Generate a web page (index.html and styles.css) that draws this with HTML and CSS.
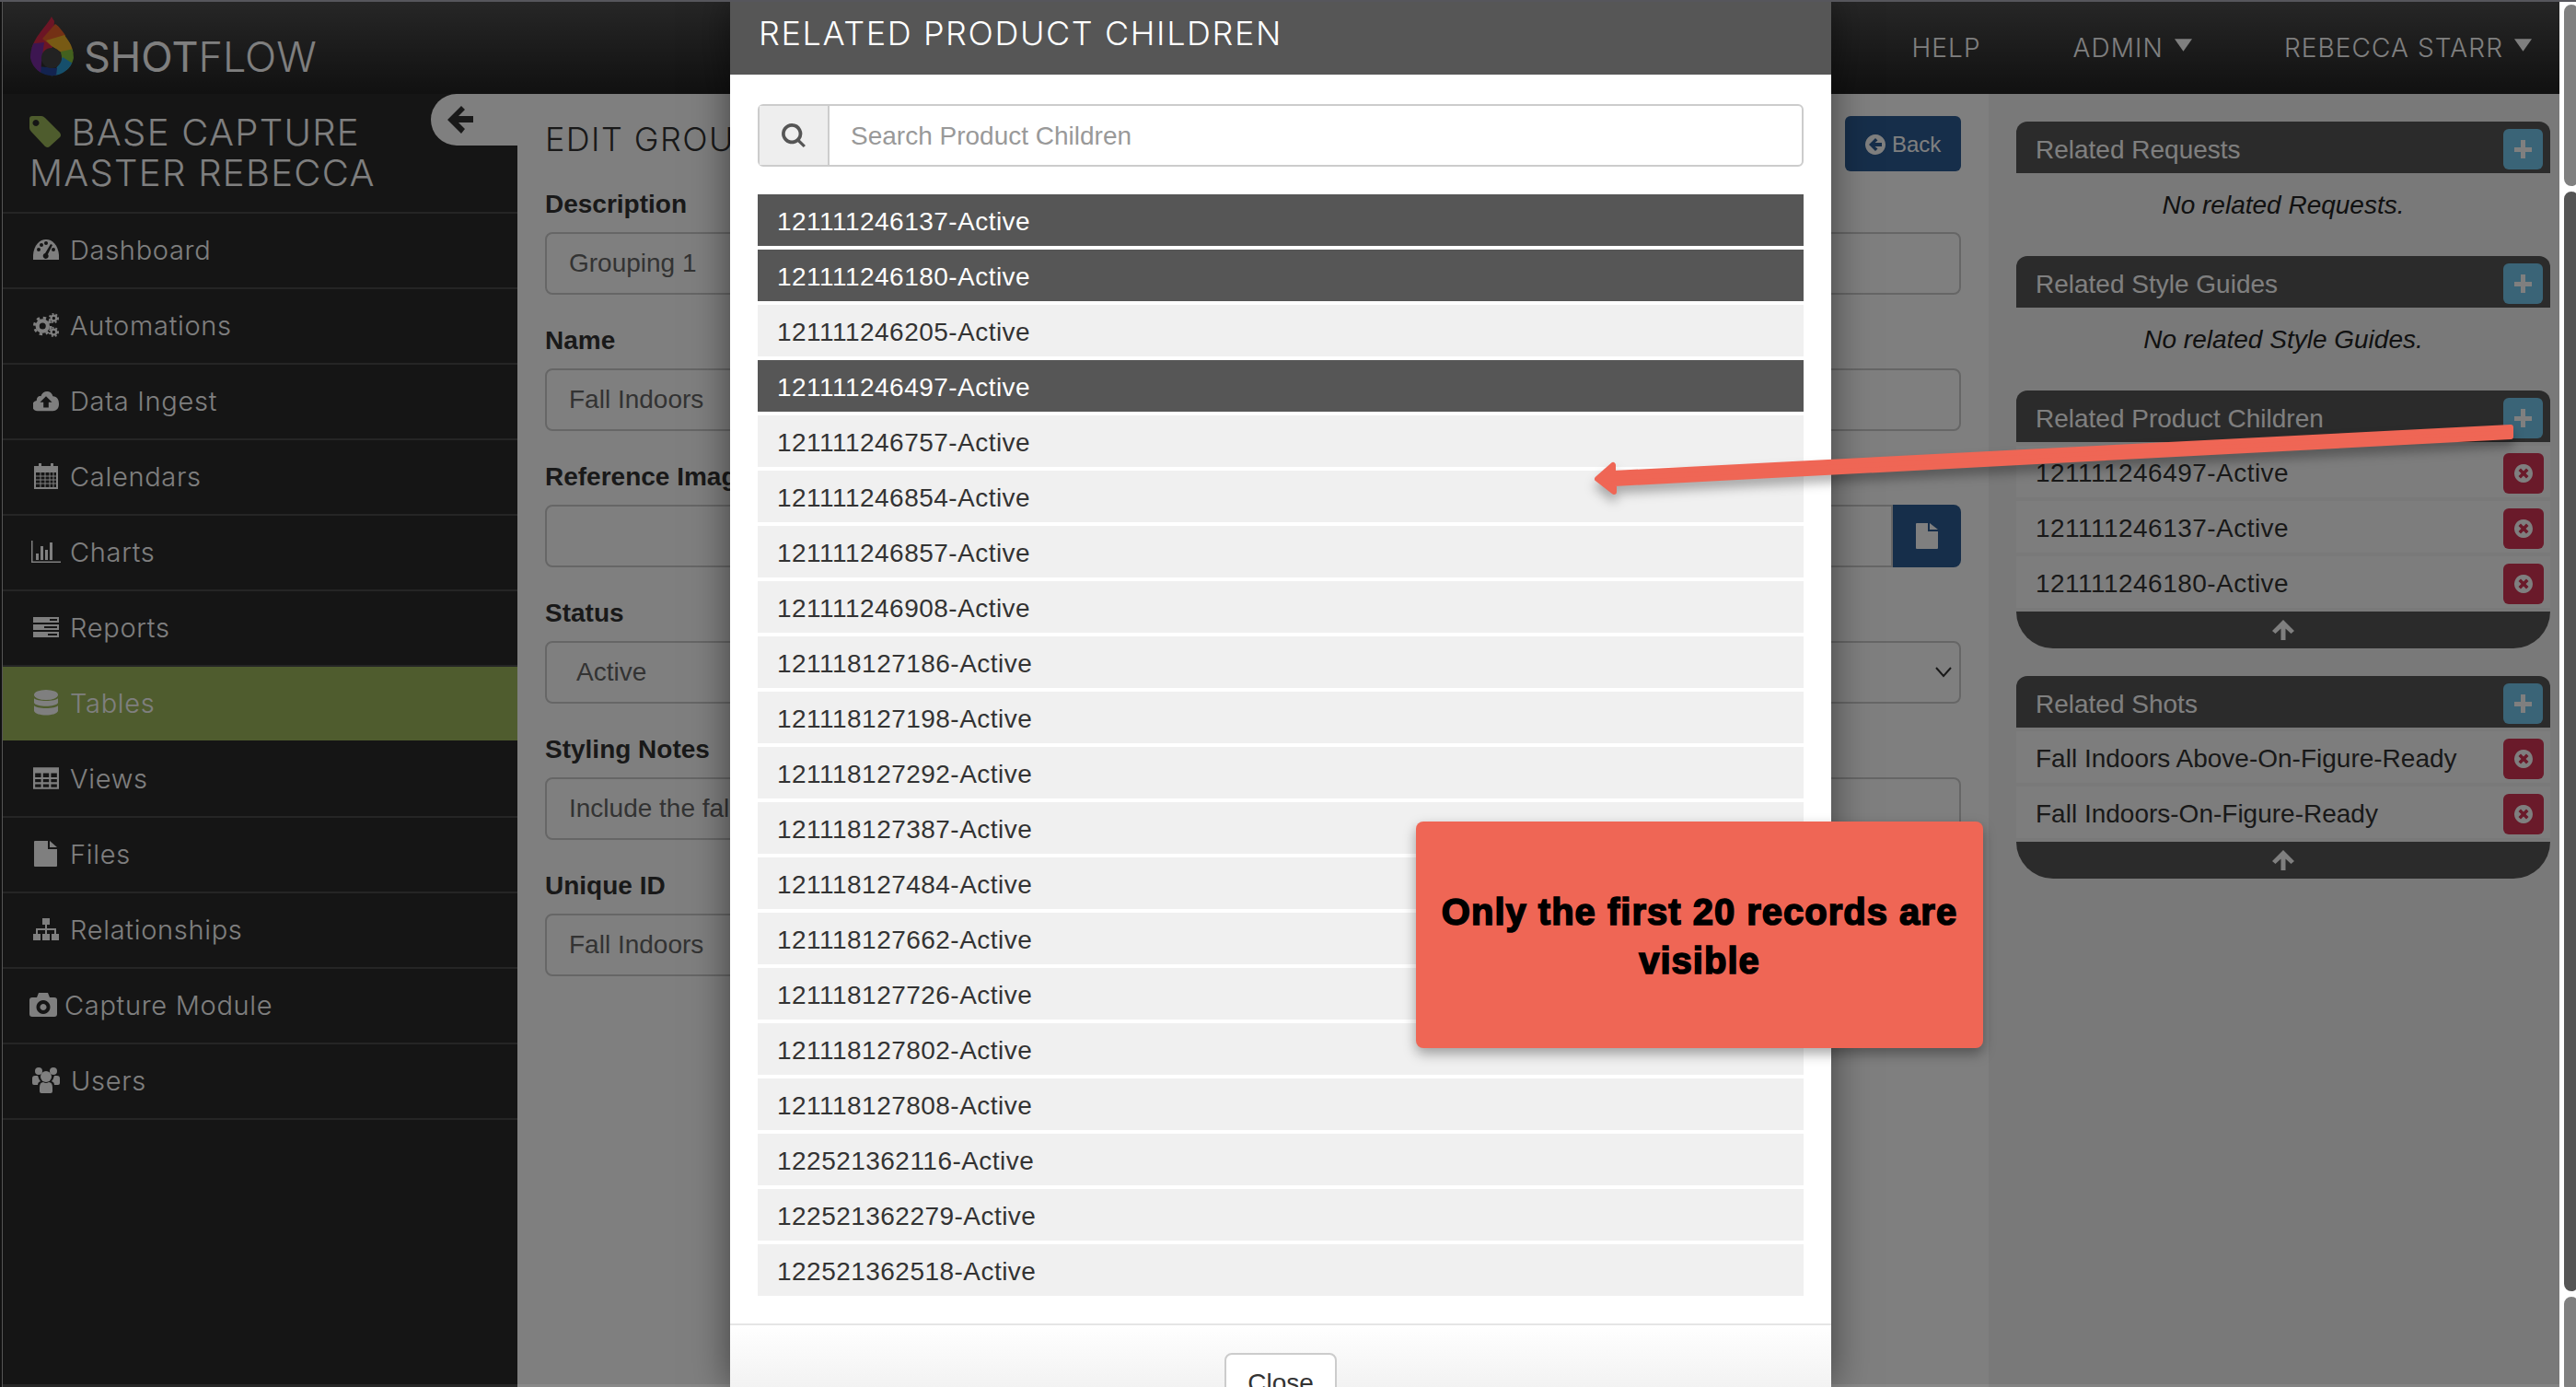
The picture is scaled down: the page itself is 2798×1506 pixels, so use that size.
FILE: index.html
```html
<!DOCTYPE html>
<html lang="en">
<head>
<meta charset="utf-8">
<title>Shotflow</title>
<link rel="stylesheet" href="styles.css">
</head>
<body>
<div class="page">
  <div class="app">
    <header class="navbar">
      <div class="brand">
        <svg class="logo" viewBox="33 18 48 69">
          <defs><clipPath id="drop"><path d="M56 18C62 30 80 42 80 63a24 24 0 0 1-47 0C33 42 50 30 56 18Z"/></clipPath></defs>
          <g clip-path="url(#drop)">
            <path fill="#d92b4b" d="M56 62L30 50V10H60Z"/>
            <path fill="#e8622a" d="M56 50L46 42L60 26L72 34L68 50Z"/>
            <path fill="#f0b428" d="M56 50L50 44L70 38L84 58L68 58Z"/>
            <path fill="#86c23c" d="M66 56L84 52L84 76L68 76Z"/>
            <path fill="#2c9ed8" d="M68 62L84 72L76 90L50 90L60 76Z"/>
            <path fill="#26479e" d="M62 74L60 90L36 90L40 72Z"/>
            <path fill="#7b2da2" d="M45 68L44 82L28 82L28 48L48 46Z"/>
            <circle cx="56" cy="63" r="11" fill="#444"/>
          </g>
        </svg>
        <span class="wordmark">SHOT<span class="wordmark-thin">FLOW</span></span>
      </div>
      <nav class="topnav">
        <a class="topnav-link">HELP</a>
        <a class="topnav-link">ADMIN <svg class="caret" viewBox="0 0 20 14"><path d="M0 0H20L10 14Z"/></svg></a>
        <a class="topnav-link">REBECCA STARR <svg class="caret" viewBox="0 0 20 14"><path d="M0 0H20L10 14Z"/></svg></a>
      </nav>
    </header>
    <div class="workspace">
      <aside class="sidebar">
        <div class="project">
          <svg class="tag" viewBox="0 0 34 34"><path fill-rule="evenodd" d="M3 0H13Q15 0 17 2L33 18Q35 21 33 23L22 33Q20 35 17 33L2 17Q0 15 0 13V3Q0 0 3 0ZM7 4a3.5 3.5 0 1 0 .01 0Z"/></svg>
          BASE CAPTURE<br>MASTER REBECCA
        </div>
        <a class="side-item">
          <svg class="ic" viewBox="0 0 28 22"><path d="M0 22C-1 8 6 0 14 0S29 8 28 22Z"/><g class="cut"><circle cx="6" cy="11" r="2"/><circle cx="9" cy="6" r="2"/><circle cx="14" cy="4" r="2"/><circle cx="22" cy="11" r="2"/><path d="M19 5L21 6L16 16A3 3 0 1 1 13 15Z"/></g></svg>
          Dashboard
        </a>
        <a class="side-item">
          <svg class="ic" viewBox="0 0 30 28"><circle cx="11" cy="15" r="6" fill="none" stroke="#fff" stroke-width="4.5"/><circle cx="11" cy="15" r="9.5" fill="none" stroke="#fff" stroke-width="3" stroke-dasharray="3.6 3.9"/><circle cx="24" cy="6" r="3" fill="none" stroke="#fff" stroke-width="2.4"/><circle cx="24" cy="6" r="5" fill="none" stroke="#fff" stroke-width="2" stroke-dasharray="2 2.2"/><circle cx="24" cy="22" r="3" fill="none" stroke="#fff" stroke-width="2.4"/><circle cx="24" cy="22" r="5" fill="none" stroke="#fff" stroke-width="2" stroke-dasharray="2 2.2"/></svg>
          Automations
        </a>
        <a class="side-item">
          <svg class="ic" viewBox="0 0 30 24"><path d="M6 24A6 6 0 0 1 4 12C4 8 7 6 9 7C11 0 21 -1 23 7C28 7 30 11 30 16C30 21 27 24 23 24Z"/><path class="cut" d="M15 7L22 14H18V20H12V14H8Z"/></svg>
          Data Ingest
        </a>
        <a class="side-item">
          <svg class="ic" viewBox="0 0 26 28"><path fill-rule="evenodd" d="M0 3H26V28H0ZM2 10V26H24V10Z"/><path d="M5 0h3v6H5zM18 0h3v6h-3zM2 13.5h22v1H2zM2 17.5h22v1H2zM2 21.5h22v1H2zM6.500 10h1v16h-1zM11.500 10h1v16h-1zM16.500 10h1v16h-1zM20.500 10h1v16h-1z"/></svg>
          Calendars
        </a>
        <a class="side-item side-item-wide">
          <svg class="ic" viewBox="0 0 32 24"><path d="M0 0h1.500v22.500H32V24H0zM5 14h3v7H5zM10 6h3v15h-3zM15 10h3v11h-3zM20 2h3v19h-3z"/></svg>
          Charts
        </a>
        <a class="side-item">
          <svg class="ic" viewBox="0 0 28 22"><path fill-rule="evenodd" d="M0 0H28V6H0ZM18 2V4H26V2ZM0 8H28V14H0ZM12 10V12H26V10ZM0 16H28V22H0ZM16 18V20H26V18Z"/></svg>
          Reports
        </a>
        <a class="side-item side-item-active">
          <svg class="ic" viewBox="0 0 26 28"><ellipse cx="13" cy="5.500" rx="13" ry="5.500"/><path d="M0 9C2 13 24 13 26 9V14C24 19 2 19 0 14ZM0 17C2 21 24 21 26 17V23C24 29 2 29 0 23Z"/></svg>
          Tables
        </a>
        <a class="side-item">
          <svg class="ic" viewBox="0 0 26 22"><path fill-rule="evenodd" d="M0 0H26V22H0ZM2 6V10H8V6ZM10 6V10H16V6ZM18 6V10H24V6ZM2 12V15H8V12ZM10 12V15H16V12ZM18 12V15H24V12ZM2 17V20H8V17ZM10 17V20H16V17ZM18 17V20H24V17Z"/></svg>
          Views
        </a>
        <a class="side-item">
          <svg class="ic" viewBox="0 0 26 28"><path d="M1 0H15V9H25V27Q25 28 24 28H1Q0 28 0 27V1Q0 0 1 0ZM17 0L25 7H17Z"/></svg>
          Files
        </a>
        <a class="side-item">
          <svg class="ic" viewBox="0 0 28 24"><path d="M10 0h8v7h-8zM0 17h8v7H0zM10 17h8v7h-8zM20 17h8v7h-8z"/><path d="M13 7h2v4h10v6h-2v-4h-8v4h-2v-4H5v4H3v-6h10z"/></svg>
          Relationships
        </a>
        <a class="side-item side-item-camera">
          <svg class="ic" viewBox="0 0 30 26"><path fill-rule="evenodd" d="M3 5H8L10 0H20L22 5H27Q30 5 30 8V23Q30 26 27 26H3Q0 26 0 23V8Q0 5 3 5ZM15 8a7.500 7.500 0 1 0 .01 0ZM15 12a3.500 3.500 0 1 1-.01 0Z"/></svg>
          Capture Module
        </a>
        <a class="side-item">
          <svg class="ic ic-users" viewBox="0 0 30 28"><circle cx="7" cy="4" r="4"/><circle cx="23" cy="4" r="4"/><circle cx="15" cy="10" r="6"/><path d="M0 12Q0 9 3 9H6Q7 13 9 15Q6 16 6 19H2Q0 19 0 17ZM30 12Q30 9 27 9H24Q23 13 21 15Q24 16 24 19H28Q30 19 30 17ZM8 22Q8 16 12 16Q15 18 18 16Q22 16 22 22V26Q22 28 20 28H10Q8 28 8 26Z"/></svg>
          Users
        </a>
      </aside>
      <main class="main">
        <button class="collapse" type="button" aria-label="Collapse">
          <svg viewBox="0 0 28 30"><path d="M15 0L19 4L12 11H28V18H12L19 25L15 30L0 15Z"/></svg>
        </button>
        <div class="form-area">
          <div class="form-head">
            <h1 class="form-title">EDIT GROUPING</h1>
            <a class="back-btn"><svg viewBox="0 0 22 22"><path fill-rule="evenodd" d="M11 0a11 11 0 1 1-.01 0ZM11 4L4 11L11 18L13.500 15.500L10.500 13H18V9H10.500L13.500 6.500Z"/></svg>Back</a>
          </div>
          <div class="group"><div class="label">Description</div><div class="field">Grouping 1</div></div>
          <div class="group"><div class="label">Name</div><div class="field">Fall Indoors</div></div>
          <div class="group"><div class="label">Reference Image</div>
            <div class="input-group"><div class="field field-flex"></div><div class="file-btn"><svg viewBox="0 0 24 28"><path d="M1 0H13V9H24V27Q24 28 23 28H1Q0 28 0 27V1Q0 0 1 0ZM15 0L24 7H15Z"/></svg></div></div>
          </div>
          <div class="group"><div class="label">Status</div><div class="field field-select"><span>Active</span><svg viewBox="0 0 18 12"><path d="M1 1L9 10L17 1" fill="none" stroke="#333" stroke-width="2"/></svg></div></div>
          <div class="group"><div class="label">Styling Notes</div><div class="field">Include the fall collection</div></div>
          <div class="group"><div class="label">Unique ID</div><div class="field">Fall Indoors</div></div>
        </div>
      </main>
      <aside class="related">
        <section class="panel">
          <div class="panel-head">Related Requests<span class="add-btn"></span></div>
          <p class="panel-empty">No related Requests.</p>
        </section>
        <section class="panel">
          <div class="panel-head">Related Style Guides<span class="add-btn"></span></div>
          <p class="panel-empty">No related Style Guides.</p>
        </section>
        <section class="panel">
          <div class="panel-head">Related Product Children<span class="add-btn"></span></div>
          <div class="panel-row"><span class="num">121111246497-Active</span><span class="del-btn"><svg viewBox="0 0 20 20"><path fill-rule="evenodd" d="M10 0a10 10 0 1 1-.01 0ZM7 4.500L4.500 7L7.500 10L4.500 13L7 15.500L10 12.500L13 15.500L15.500 13L12.500 10L15.500 7L13 4.500L10 7.500Z"/></svg></span></div>
          <div class="panel-row"><span class="num">121111246137-Active</span><span class="del-btn"><svg viewBox="0 0 20 20"><path fill-rule="evenodd" d="M10 0a10 10 0 1 1-.01 0ZM7 4.500L4.500 7L7.500 10L4.500 13L7 15.500L10 12.500L13 15.500L15.500 13L12.500 10L15.500 7L13 4.500L10 7.500Z"/></svg></span></div>
          <div class="panel-row"><span class="num">121111246180-Active</span><span class="del-btn"><svg viewBox="0 0 20 20"><path fill-rule="evenodd" d="M10 0a10 10 0 1 1-.01 0ZM7 4.500L4.500 7L7.500 10L4.500 13L7 15.500L10 12.500L13 15.500L15.500 13L12.500 10L15.500 7L13 4.500L10 7.500Z"/></svg></span></div>
          <div class="panel-foot"><svg viewBox="0 0 24 22"><path d="M12 0L24 12L20.500 15L14.500 9.500V22H9.500V9.500L3.500 15L0 12Z"/></svg></div>
        </section>
        <section class="panel">
          <div class="panel-head">Related Shots<span class="add-btn"></span></div>
          <div class="panel-row">Fall Indoors Above-On-Figure-Ready<span class="del-btn"><svg viewBox="0 0 20 20"><path fill-rule="evenodd" d="M10 0a10 10 0 1 1-.01 0ZM7 4.500L4.500 7L7.500 10L4.500 13L7 15.500L10 12.500L13 15.500L15.500 13L12.500 10L15.500 7L13 4.500L10 7.500Z"/></svg></span></div>
          <div class="panel-row">Fall Indoors-On-Figure-Ready<span class="del-btn"><svg viewBox="0 0 20 20"><path fill-rule="evenodd" d="M10 0a10 10 0 1 1-.01 0ZM7 4.500L4.500 7L7.500 10L4.500 13L7 15.500L10 12.500L13 15.500L15.500 13L12.500 10L15.500 7L13 4.500L10 7.500Z"/></svg></span></div>
          <div class="panel-foot"><svg viewBox="0 0 24 22"><path d="M12 0L24 12L20.500 15L14.500 9.500V22H9.500V9.500L3.500 15L0 12Z"/></svg></div>
        </section>
      </aside>
    </div>
  </div>
  <div class="scrollbar">
    <div class="scroll-piece scroll-top"></div>
    <div class="scroll-piece scroll-thumb"></div>
    <div class="scroll-piece scroll-bottom"></div>
  </div>
  <div class="backdrop"></div>
  <div class="bottom-edge"></div>
  <div class="top-edge"></div>
  <div class="left-edge"></div>

  <div class="modal">
    <div class="modal-head">RELATED PRODUCT CHILDREN</div>
    <div class="modal-body">
      <div class="search">
        <span class="search-addon"><svg viewBox="0 0 28 28"><path fill-rule="evenodd" d="M12 0a12 12 0 0 1 9.500 19.300L28 25.800L25.500 28L19 21.800A12 12 0 1 1 12 0ZM12 4a8 8 0 1 0 .01 0Z"/></svg></span>
        <span class="search-input">Search Product Children</span>
      </div>
      <ul class="pick-list">
        <li class="pick pick-on">121111246137-Active</li>
        <li class="pick pick-on">121111246180-Active</li>
        <li class="pick">121111246205-Active</li>
        <li class="pick pick-on">121111246497-Active</li>
        <li class="pick">121111246757-Active</li>
        <li class="pick">121111246854-Active</li>
        <li class="pick">121111246857-Active</li>
        <li class="pick">121111246908-Active</li>
        <li class="pick">121118127186-Active</li>
        <li class="pick">121118127198-Active</li>
        <li class="pick">121118127292-Active</li>
        <li class="pick">121118127387-Active</li>
        <li class="pick">121118127484-Active</li>
        <li class="pick">121118127662-Active</li>
        <li class="pick">121118127726-Active</li>
        <li class="pick">121118127802-Active</li>
        <li class="pick">121118127808-Active</li>
        <li class="pick">122521362116-Active</li>
        <li class="pick">122521362279-Active</li>
        <li class="pick">122521362518-Active</li>
      </ul>
    </div>
    <div class="modal-foot"><span class="close-btn">Close</span></div>
  </div>

  <div class="callout">Only the first 20 records are visible</div>
  <svg class="arrow" viewBox="0 0 2798 1506"><path d="M1735 520L1752 505L1752 514L2727 464L2727 474L1753 525L1753 534Z"/></svg>
</div>
</body>
</html>
```
FILE: styles.css
```css
* { box-sizing: border-box; }
html, body { margin: 0; height: 100%; }
body {
  font-family: "Liberation Sans", Arial, sans-serif;
  font-size: 28px;
  color: #333;
  overflow: hidden;
  background: #fff;
}
svg { display: block; }

.page { position: relative; display: flex; width: 2798px; height: 1506px; overflow: hidden; }
.app { flex: 1; min-width: 0; display: flex; flex-direction: column; }

/* top bar */
.navbar {
  height: 102px;
  flex: none;
  display: flex;
  justify-content: space-between;
  align-items: flex-start;
  background: linear-gradient(#4e4e4e, #222);
  font-family: Inter, "Liberation Sans", sans-serif;
  color: #fff;
}
.brand { display: flex; padding: 18px 0 0 33px; }
.logo { width: 48px; height: 69px; }
.wordmark { margin: 17px 0 0 10px; font-size: 45px; line-height: 54px; }
.wordmark-thin { font-weight: 300; }
.topnav { display: flex; gap: 100px; padding: 34px 30px 0 0; }
.topnav-link { display: flex; align-items: center; gap: 12px; font-size: 28px; line-height: 36px; font-weight: 300; letter-spacing: 1.1px; }
.caret { width: 19px; height: 14px; fill: #fff; margin-top: -6px; }

.workspace { flex: 1; min-height: 0; display: flex; }

/* left navigation */
.sidebar {
  width: 562px;
  flex: none;
  background: #2a2a2a;
  color: #fff;
  font-family: Inter, "Liberation Sans", sans-serif;
  padding-left: 3px;
}
.project {
  height: 130px;
  padding: 20px 0 0 29px;
  font-size: 40px;
  line-height: 44px;
  font-weight: 300;
  letter-spacing: 1.3px;
  border-bottom: 2px solid #4a4a4a;
}
.tag { display: inline-block; width: 34px; height: 34px; fill: #9db85a; margin-right: -1px; vertical-align: -2px; }
.side-item {
  height: 82px;
  display: flex;
  align-items: center;
  gap: 12px;
  padding-left: 33px;
  padding-bottom: 2px;
  font-size: 29px;
  font-weight: 300;
  letter-spacing: 0.7px;
  border-bottom: 2px solid #4a4a4a;
}
.ic { width: 28px; height: 28px; fill: #fff; flex: none; }
.ic .cut { fill: #2a2a2a; }
.side-item-wide { padding-left: 31px; gap: 10px; }
.side-item-wide .ic { width: 32px; }
.side-item-camera { padding-left: 29px; gap: 8px; }
.side-item-camera .ic { width: 30px; }
.ic-users { width: 30px; margin-left: -1px; }
.side-item-active { background: #9eb85c; border-bottom-color: #2a2a2a; }
.side-item-active .ic { fill: #fff; }

/* form */
.main { flex: 1; min-width: 0; position: relative; background: #fff; }
.collapse {
  position: absolute;
  left: -94px;
  top: 0;
  width: 94px;
  height: 56px;
  padding: 0 0 0 18px;
  border: 0;
  background: #fff;
  border-radius: 28px 0 0 28px;
}
.collapse svg { width: 28px; height: 30px; fill: #333; }
.form-area { padding: 24px 30px 0 30px; }
.form-head { height: 60px; margin-bottom: 18px; display: flex; justify-content: space-between; }
.form-title { margin: 3px 0 0; font: 300 36px/44px Inter, sans-serif; letter-spacing: 1.4px; color: #333; }
.back-btn {
  width: 126px;
  height: 60px;
  display: flex;
  align-items: center;
  gap: 7px;
  padding-left: 22px;
  padding-top: 2px;
  border-radius: 6px;
  background: #2c5c94;
  color: #fff;
  font-size: 24px;
}
.back-btn svg { width: 22px; height: 22px; fill: #fff; }
.group { margin-bottom: 32px; }
.label { height: 36px; margin-bottom: 12px; font-weight: 700; line-height: 36px; }
.field {
  height: 68px;
  display: flex;
  align-items: center;
  padding: 0 24px;
  border: 2px solid #ccc;
  border-radius: 8px;
  background: #fff;
  color: #666;
}
.input-group { display: flex; }
.field-flex { flex: 1; border-radius: 8px 0 0 8px; }
.file-btn {
  width: 74px;
  height: 68px;
  display: flex;
  align-items: center;
  justify-content: center;
  border-radius: 0 8px 8px 0;
  background: #2c5c94;
}
.file-btn svg { width: 24px; height: 28px; fill: #fff; }
.field-select { justify-content: space-between; padding: 0 8px 0 32px; }
.field-select svg { width: 18px; height: 12px; }

/* related column */
.related { width: 620px; flex: none; padding: 30px 10px 0 30px; background: #f2f2f2; }
.panel { margin-bottom: 30px; }
.panel-head {
  height: 56px;
  display: flex;
  justify-content: space-between;
  padding: 12px 8px 0 21px;
  border-radius: 12px 12px 0 0;
  background: #565656;
  color: #fff;
  line-height: 38px;
  margin-bottom: 4px;
}
.add-btn {
  position: relative;
  width: 43px;
  height: 44px;
  margin-top: -4px;
  border-radius: 6px;
  background: #74c8ee;
}
.add-btn::before, .add-btn::after { content: ""; position: absolute; background: #fff; }
.add-btn::before { left: 12px; top: 20px; width: 19px; height: 5px; }
.add-btn::after { left: 19px; top: 12px; width: 5px; height: 20px; }
.panel-empty {
  height: 56px;
  margin: 0;
  padding-top: 11px;
  text-align: center;
  font-style: italic;
  line-height: 40px;
  color: #222;
}
.panel-row {
  height: 56px;
  margin-bottom: 4px;
  display: flex;
  justify-content: space-between;
  align-items: center;
  padding: 4px 7px 0 21px;
  background: #fbfbfb;
}
.num { letter-spacing: 0.47px; }
.del-btn {
  width: 44px;
  height: 44px;
  flex: none;
  display: flex;
  align-items: center;
  justify-content: center;
  border-radius: 6px;
  background: #d43454;
}
.del-btn svg { width: 20px; height: 20px; fill: #fff; }
.panel-foot {
  height: 40px;
  display: flex;
  align-items: center;
  justify-content: center;
  border-radius: 0 0 40px 40px;
  background: #565656;
}
.panel-foot svg { width: 24px; height: 22px; fill: #fff; }

/* browser scrollbar */
.scrollbar { width: 18px; flex: none; padding-left: 2px; overflow: hidden; position: relative; z-index: 15; background: #fff; }
.scroll-piece { width: 22px; border: 3px solid #fff; border-radius: 11px; }
.scroll-top { height: 203px; margin-top: 2px; background: #808080; }
.scroll-thumb { height: 1200px; background: #555; }
.scroll-bottom { height: 110px; background: #808080; }

/* overlay layers */
.backdrop { position: absolute; inset: 0 18px 0 0; z-index: 10; background: rgba(0, 0, 0, 0.5); }
.bottom-edge { position: absolute; left: 0; right: 18px; bottom: 0; height: 3px; z-index: 11; background: rgba(255, 255, 255, 0.08); }
.top-edge { position: absolute; left: 0; right: 0; top: 0; height: 2px; z-index: 40; background: #56565c; }
.left-edge { position: absolute; left: 0; top: 0; bottom: 0; width: 3px; z-index: 11; background: #111; border-right: 1px solid #555; }

.modal {
  position: absolute;
  left: 793px;
  top: 2px;
  width: 1196px;
  height: 1504px;
  z-index: 20;
  overflow: hidden;
  background: #fff;
  box-shadow: 0 0 40px rgba(0, 0, 0, 0.5);
}
.modal-head {
  height: 79px;
  padding: 12px 0 0 31px;
  background: #565656;
  color: #fff;
  font: 300 36px/44px Inter, sans-serif;
  letter-spacing: 1.6px;
}
.modal-body { padding: 32px 30px 30px; border-bottom: 2px solid #e5e5e5; }
.search { height: 68px; display: flex; border: 2px solid #ccc; border-radius: 6px; margin-bottom: 30px; }
.search-addon {
  width: 76px;
  display: flex;
  align-items: center;
  justify-content: center;
  background: #eee;
  border-right: 2px solid #ccc;
}
.search-addon svg { width: 26px; height: 26px; fill: #555; }
.search-input { flex: 1; padding: 0 23px; line-height: 65px; color: #999; }
.pick-list { margin: 0; padding: 0; list-style: none; display: flex; flex-direction: column; gap: 4px; }
.pick { height: 56px; padding: 0 21px; background: #f0f0f0; line-height: 60px; letter-spacing: 0.47px; color: #333; }
.pick-on { background: #565656; color: #fff; }
.modal-foot { padding-top: 30px; height: 100px; display: flex; justify-content: center; background: linear-gradient(#fff, #ececec); }
.close-btn {
  width: 122px;
  height: 68px;
  border: 2px solid #ccc;
  border-radius: 8px;
  background: #fff;
  text-align: center;
  line-height: 62px;
}

.callout {
  position: absolute;
  left: 1538px;
  top: 892px;
  width: 616px;
  height: 246px;
  z-index: 30;
  display: flex;
  align-items: center;
  padding: 4px 20px 0;
  text-align: center;
  border-radius: 8px;
  background: #ef6655;
  box-shadow: 0 6px 14px rgba(0, 0, 0, 0.35);
  color: #000;
  font-weight: 700;
  font-size: 40px;
  line-height: 53px;
  -webkit-text-stroke: 1.6px #000;
  letter-spacing: 1px;
}
.arrow {
  position: absolute;
  inset: 0;
  width: 2798px;
  height: 1506px;
  z-index: 31;
  pointer-events: none;
  filter: drop-shadow(0 8px 6px rgba(0, 0, 0, 0.3));
}
.arrow path { fill: #ef6655; stroke: #ef6655; stroke-width: 6; stroke-linejoin: round; }
```
